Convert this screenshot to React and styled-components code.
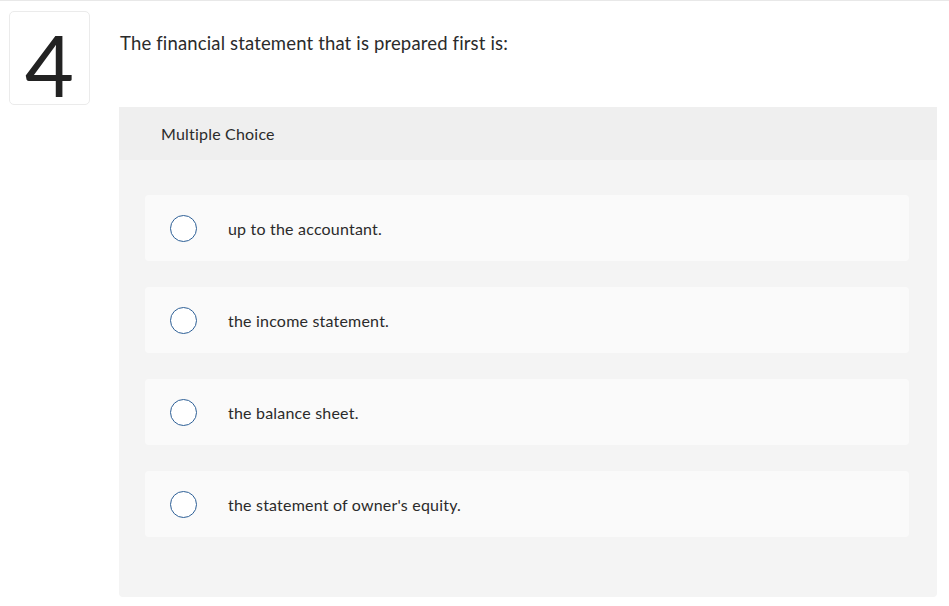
import React from "react"
import styled, { createGlobalStyle } from "styled-components"

const GlobalStyle = createGlobalStyle`
  html, body {
    margin: 0;
    padding: 0;
    background: #fff;
  }
  body {
    font-family: "Lato", "Open Sans", sans-serif;
    color: #333;
  }
`

const Page = styled.div`
  width: 949px;
  height: 606px;
  box-sizing: border-box;
  border-top: 1px solid #e8e8e8;
  display: flex;
  align-items: flex-start;
  overflow: hidden;
`

const NumberBox = styled.div`
  flex: none;
  width: 81px;
  height: 94px;
  box-sizing: border-box;
  margin: 10px 0 0 9px;
  border: 1px solid #ebebeb;
  border-radius: 5px;
  display: flex;
  align-items: center;
  justify-content: center;
  font-family: "Lato", sans-serif;
  font-weight: 400;
  font-size: 85px;
  line-height: 1;
  color: #222;
  padding-top: 12px;
`

const Main = styled.div`
  flex: 1;
  display: flex;
  flex-direction: column;
  margin-left: 29px;
  margin-right: 12px;
`

const Question = styled.div`
  font-size: 18.5px;
  line-height: 24px;
  color: #2b2b2b;
  padding: 30px 0 0 1px;
  height: 106px;
  box-sizing: border-box;
  letter-spacing: 0.15px;
`

const Panel = styled.div`
  background: #f4f4f4;
  border-radius: 0 0 4px 4px;
  display: flex;
  flex-direction: column;
  height: 490px;
`

const PanelHeader = styled.div`
  height: 53px;
  background: #efefef;
  display: flex;
  align-items: center;
  padding-left: 42px;
  font-size: 16px;
  letter-spacing: 0.2px;
  color: #2b2b2b;
`

const Options = styled.div`
  display: flex;
  flex-direction: column;
  gap: 26px;
  padding: 35px 28px 0 26px;
`

const Option = styled.label`
  height: 66px;
  background: #fafafa;
  border-radius: 4px;
  display: flex;
  align-items: center;
  padding-left: 25px;
  cursor: pointer;
`

const Radio = styled.span`
  width: 27px;
  height: 27px;
  box-sizing: border-box;
  border-radius: 50%;
  border: 1.5px solid #2d5f96;
  background: #fff;
  flex: none;
`

const OptionText = styled.span`
  margin-left: 31px;
  font-size: 16px;
  color: #2b2b2b;
  letter-spacing: 0.2px;
`

const answers = [
  "up to the accountant.",
  "the income statement.",
  "the balance sheet.",
  "the statement of owner's equity.",
]

export default function App() {
  return (
    <>
      <GlobalStyle />
      <Page>
        <NumberBox>4</NumberBox>
        <Main>
          <Question>The financial statement that is prepared first is:</Question>
          <Panel>
            <PanelHeader>Multiple Choice</PanelHeader>
            <Options>
              {answers.map((a) => (
                <Option key={a}>
                  <Radio />
                  <OptionText>{a}</OptionText>
                </Option>
              ))}
            </Options>
          </Panel>
        </Main>
      </Page>
    </>
  )
}
